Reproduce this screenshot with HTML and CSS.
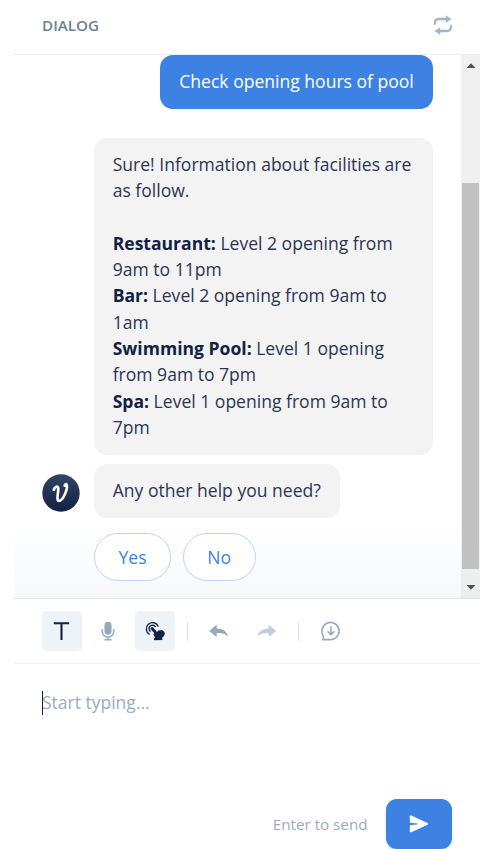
FILE: index.html
```html
<!DOCTYPE html>
<html lang="en">
<head>
<meta charset="utf-8">
<title>Dialog</title>
<link rel="stylesheet" href="styles.css">
</head>
<body>
<main class="panel">
  <header class="header">
    <h1 class="title">DIALOG</h1>
    <svg class="refresh" viewBox="0 0 20 20" fill="none" stroke="#a4b4c4" stroke-width="2.300">
      <path d="M2 9.800V8Q2 4 6 4h8M18 10.200v1.800q0 4-4 4H6"/>
      <path d="M12.800 .3v7.400L18.500 4zM7.200 12.300v7.400L1.500 16z" fill="#a4b4c4" stroke="none"/>
    </svg>
  </header>
  <section class="chat">
    <div class="messages">
      <div class="bubble user">Check opening hours of pool</div>
      <div class="bubble info">Sure! Information about facilities are as follow.<br><br><b>Restaurant:</b> Level 2 opening from 9am to 11pm<br><b>Bar:</b> Level 2 opening from 9am to 1am<br><b>Swimming Pool:</b> Level 1 opening from 9am to 7pm<br><b>Spa:</b> Level 1 opening from 9am to 7pm</div>
      <div class="reply">
        <svg class="avatar" viewBox="0 0 38 38">
          <defs><linearGradient id="navy" x2="0" y2="1"><stop stop-color="#344464"/><stop offset="1" stop-color="#132144"/></linearGradient></defs>
          <circle cx="19" cy="19" r="18.700" fill="url(#navy)"/>
          <path d="M11.800 15.800c.8-3 4.400-4.800 4.500-1.200.1 3.500-2.200 12.200.6 12.200 4.400 0 9.300-12.800 7.700-16.100-.7-1-1.900-.2-1.900 1" fill="none" stroke="#fff" stroke-width="2.700" stroke-linecap="round"/>
        </svg>
        <div class="bubble">Any other help you need?</div>
      </div>
      <div class="choices"><button class="choice yes">Yes</button><button class="choice no">No</button></div>
    </div>
    <div class="scrollbar">
      <svg class="arrow" viewBox="0 0 10 5"><path d="M.5 5 5 .3 9.500 5z" fill="#505050"/></svg>
      <div class="thumb"></div>
      <svg class="arrow down" viewBox="0 0 10 5"><path d="M.5 0 5 4.700 9.500 0z" fill="#505050"/></svg>
    </div>
  </section>
  <nav class="toolbar">
    <span class="tool active"><svg viewBox="0 0 20 20"><path d="M1.800 2.300h15.400M9.500 2.300V19" fill="none" stroke="#132144" stroke-width="2.100"/></svg></span>
    <span class="tool mic"><svg viewBox="0 0 20 20"><rect x="6.500" y=".7" width="7" height="13" rx="3.500" fill="#97a8bb"/><path d="M4.300 8v2.500a5.700 5.700 0 0 0 11.400 0V8M10 16.500v2M6.500 18.700h7" fill="none" stroke="#97a8bb" stroke-width="1.500"/></svg></span>
    <span class="tool active"><svg viewBox="0 0 20 20"><g fill="none" stroke="#132144" stroke-width="1.400"><path d="M4.600 13.500A6.300 6.300 0 1 1 13.400 5.500"/><path d="M5.600 10.600A3.500 3.500 0 1 1 10.600 6"/></g><path d="M6.300 6.400c.9-.6 1.700-.2 2.300.5l3.500 4 1.200-1.300 4.100-.7.500 1.100c1.400.2 2 1.500 1.800 3-.2 2-1.500 3-2.500 3.500l.2 2.600-8.200.2-.6-1.600 1.700-.9-1.900-3.300 1-1.200-3.200-3.500c-.8-.8-.8-1.800.1-2.400z" fill="#132144"/></svg></span>
    <i class="divider"></i>
    <span class="tool undo"><svg viewBox="0 0 20 20"><path d="M.2 10 7.700 3.800v3.600c6 0 10 2.800 11.500 8-3.300-3.100-7-3.500-11.500-3.300v4z" fill="#97a8bb"/></svg></span>
    <span class="tool redo"><svg viewBox="0 0 20 20"><path d="M19.200 10 11.700 3.800v3.600C5.700 7.400 1.700 10.200.2 15.400c3.300-3.100 7-3.500 11.500-3.300v4z" fill="#bfcedd"/></svg></span>
    <i class="divider second"></i>
    <span class="tool save"><svg viewBox="0 0 20 20" fill="none" stroke="#97a8bb" stroke-width="1.600"><path d="M2.500 15A8.600 8.600 0 1 1 10 18.600H2z"/><path d="M10 5.500v8M6.500 10.200l3.500 3.500 3.500-3.500"/></svg></span>
  </nav>
  <section class="composer">
    <div class="input"><i class="caret"></i>Start typing...</div>
    <div class="actions">
      <span class="hint">Enter to send</span>
      <button class="send" aria-label="Send"><svg viewBox="0 0 20 18"><path d="M.7 1.500Q1 .1 2.300.6L18.600 8q1.200.9 0 1.700L2.300 17.200Q1 17.600.7 16.200L1 10l7.500-.6v-1L1 7.700z" fill="#fff"/></svg></button>
    </div>
  </section>
</main>
</body>
</html>
```
FILE: styles.css
```css
* { box-sizing: border-box; }
body { margin: 0; background: #fff; font-family: "Open Sans", sans-serif; }
button { font: inherit; }
svg { display: block; }
.panel { width: 466px; height: 849px; margin-left: 14px; display: flex; flex-direction: column; overflow: hidden; }
.header { height: 55px; flex: none; padding: 0 27px 4px 28px; display: flex; align-items: center; justify-content: space-between; border-bottom: 1px solid #e8eef3; }
.title { margin: 0 0 1px; font-size: 15.200px; font-weight: 600; color: #6b8194; }
.refresh { width: 20px; height: 20px; }
.chat { height: 543px; flex: none; display: flex; background: linear-gradient(#fff 86%, #f6f8fa); }
.messages { flex: 1; padding: 0 28.500px 0 28px; display: flex; flex-direction: column; font-size: 17.560px; line-height: 26.340px; color: #2b3554; }
.bubble { padding: 13.200px 18.700px; border-radius: 13px; background: #f3f3f3; }
.user { width: 272.500px; height: 54px; align-self: flex-end; background: #3d82e2; color: #fff; padding: 13px 0 13px 19.300px; }
.info { width: 338.500px; height: 317px; align-self: flex-end; margin-top: 28.500px; }
.info b { color: #132144; }
.reply { display: flex; margin-top: 9.500px; height: 54px; }
.reply .bubble { width: 245.500px; padding-right: 0; }
.avatar { width: 38px; height: 38px; margin: 10px 14.500px 0 -.5px; }
.choices { display: flex; gap: 12px; margin: 15px 0 0 52px; }
.choice { height: 48px; padding: 0; border: 1px solid #bcd5f7; border-radius: 24px; background: #fff; color: #3d82e2; }
.yes { width: 77px; }
.no { width: 72.500px; }
.scrollbar { width: 19px; padding: 8px 0; display: flex; flex-direction: column; align-items: center; background: linear-gradient(#f0f0f0 88%, #eceeee); }
.arrow { width: 10px; height: 5px; }
.thumb { width: 17px; height: 386px; margin-top: 115px; background: #c1c1c1; }
.down { margin-top: 16px; }
.toolbar { height: 66px; flex: none; padding-left: 28px; display: flex; align-items: center; border-top: 1px solid #dfe6eb; border-bottom: 1px solid #edf1f3; }
.tool { width: 40px; height: 40px; display: grid; place-items: center; border-radius: 5px; }
.tool svg { width: 20px; height: 20px; }
.active { background: #edf3f6; }
.mic { margin: 0 14px 0 13px; width: 26px; }
.divider { width: 1px; height: 19px; margin-left: 12px; background: #dce3ed; }
.undo { margin-left: 11px; }
.redo { margin-left: 8px; }
.second { margin-left: 11px; }
.save { margin-left: 12px; }
.composer { flex: 1; padding: 25px 28px 0; display: flex; flex-direction: column; justify-content: space-between; color: #9aacbe; }
.input { position: relative; font-size: 17.500px; line-height: 26px; }
.caret { position: absolute; left: 0; top: 2px; width: 1px; height: 24px; background: #132144; }
.actions { display: flex; align-items: center; justify-content: flex-end; gap: 18.500px; font-size: 15.200px; }
.hint { margin-bottom: 1px; }
.send { width: 66px; height: 50px; padding: 0; border: 0; border-radius: 11px; background: #3d82e2; display: grid; place-items: center; box-shadow: 0 1px 2px #3d82e255; }
.send svg { width: 20px; height: 18px; }
```
